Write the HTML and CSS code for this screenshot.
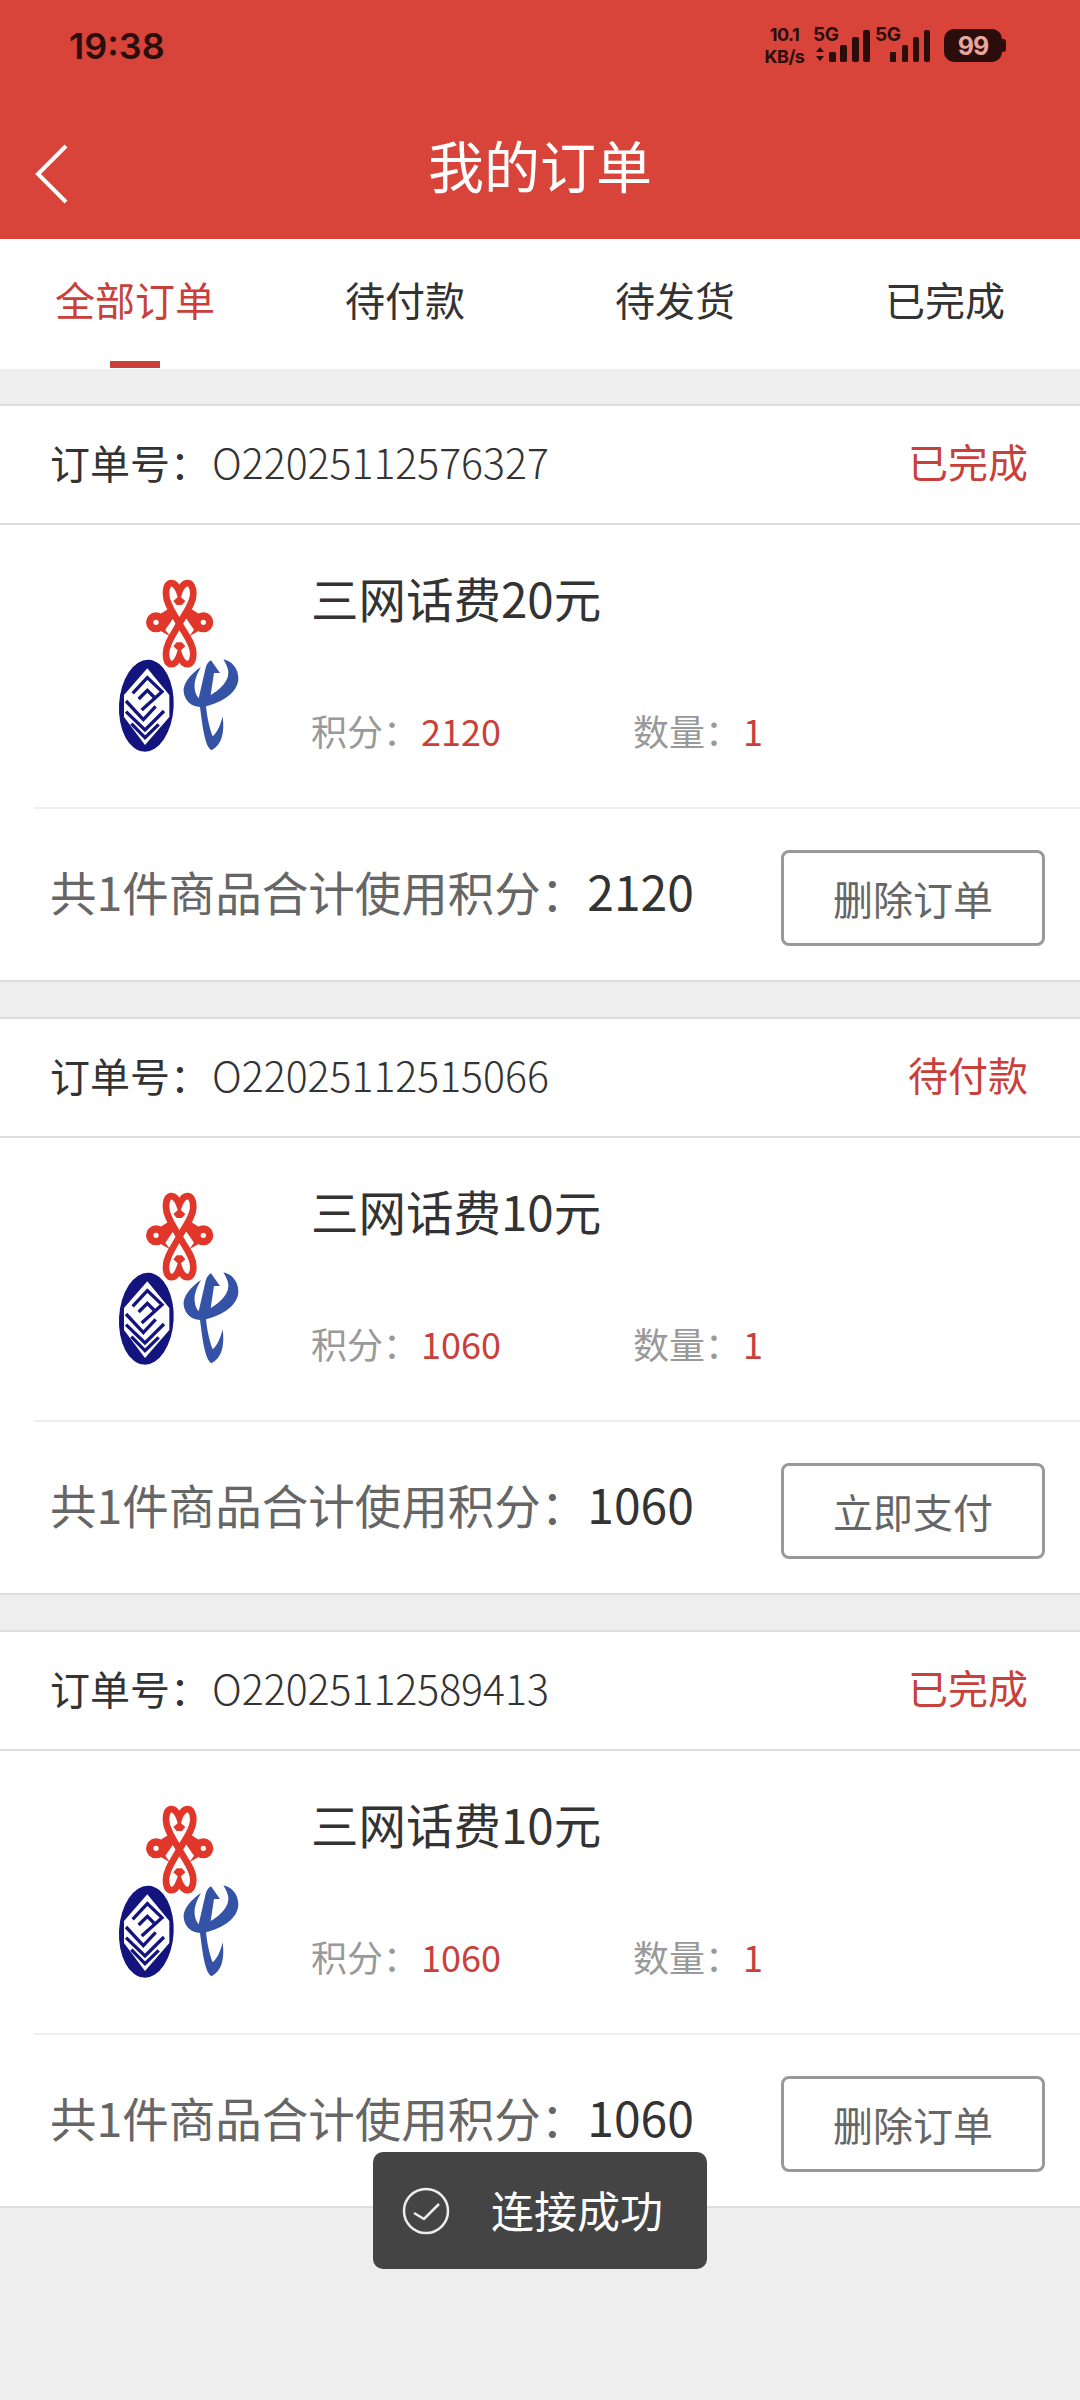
FILE: index.html
```html
<!DOCTYPE html>
<html lang="zh-CN">
<head>
  <meta charset="UTF-8">
  <title>我的订单</title>
  <link rel="stylesheet" href="styles.css">
</head>
<body>

  <!-- Logo de operadoras, se reutiliza en cada pedido -->
  <svg class="defs" width="0" height="0">
    <symbol id="logo-operadoras" viewBox="0 0 540 600">
      <g fill="none" stroke="#e1372a" stroke-width="20">
        <path d="M268 92C255 56 228 58 228 98C228 128 250 155 268 188C286 221 310 248 310 278C310 318 281 320 268 284C255 320 228 318 228 278C228 248 250 221 268 188C286 155 310 128 310 98C310 58 281 56 268 92Z"/>
        <circle cx="198" cy="184" r="19" stroke-width="22"/>
        <circle cx="340" cy="184" r="19" stroke-width="22"/>
      </g>
      <g fill="#e1372a">
        <path d="M212 158L238 142L254 166L226 206L240 226L212 210Z"/>
        <path d="M326 158L300 142L284 166L312 206L298 226L326 210Z"/>
        <path d="M250 120L268 104L286 120L276 132L260 132Z"/>
        <path d="M250 256L268 272L286 256L276 244L260 244Z"/>
      </g>
      <ellipse cx="169" cy="434" rx="82" ry="138" transform="rotate(3 169 434)" fill="#14147f"/>
      <path fill="#fff" d="M172 322L102 402V468L165 552L238 468V402Z"/>
      <g fill="none" stroke="#14147f" stroke-width="10">
        <path d="M128 397L172 350L216 392L155 447"/>
        <path d="M146 414L172 388L192 408"/>
        <path d="M108 420L160 476L197 436"/>
        <path d="M108 452L165 507L222 450"/>
        <path d="M124 488L165 530L206 490"/>
      </g>
      <path fill="#3553a6" d="M333 318C300 340 278 370 281 392C284 420 305 436 330 438C338 500 345 555 364 568C396 552 404 515 398 466C392 490 384 512 368 526C360 505 352 475 348 436C395 425 445 395 445 352C445 322 425 300 400 295C412 315 418 330 414 345C410 365 385 390 362 402L372 336L390 336L363 298C355 302 350 310 347 320L326 412C316 400 312 385 314 365C318 345 326 330 333 318Z"/>
    </symbol>
  </svg>

  <div class="app">

    <div class="top-red">
      <div class="statusbar">
        <span class="hora">19:38</span>
        <div class="status-icons">
          <div class="velocidad"><span>10.1</span><span>KB/s</span></div>
          <div class="red-movil red-uno">
            <span class="cincog">5G</span>
            <svg class="flechas" width="8" height="14" viewBox="0 0 8 14"><path d="M4 0L8 5H0ZM4 14L0 9H8Z" fill="#2b0e0c"/></svg>
            <svg width="41" height="32" viewBox="0 0 41 32" fill="#2b0e0c">
              <rect x="0" y="22" width="7" height="10" rx="1.5"/>
              <rect x="11" y="15" width="7" height="17" rx="1.5"/>
              <rect x="23" y="7" width="7" height="25" rx="2"/>
              <rect x="34" y="0" width="7" height="32" rx="2"/>
            </svg>
          </div>
          <div class="red-movil red-dos">
            <span class="cincog">5G</span>
            <svg width="40" height="32" viewBox="0 0 40 32" fill="#2b0e0c">
              <rect x="0" y="22" width="6" height="10" rx="1"/>
              <rect x="12" y="15" width="6" height="17" rx="1.5"/>
              <rect x="23" y="7" width="6" height="25" rx="2"/>
              <rect x="34" y="0" width="6" height="32" rx="2"/>
            </svg>
          </div>
          <div class="bateria"><span>99</span></div>
        </div>
      </div>
      <header class="navbar">
        <svg class="back" width="34" height="60" viewBox="0 0 34 60"><path d="M32 2L4 30L32 58" fill="none" stroke="#fff" stroke-width="4"/></svg>
        <h1>我的订单</h1>
      </header>
    </div>

    <nav class="tabs">
      <a class="tab activo">全部订单</a>
      <a class="tab">待付款</a>
      <a class="tab">待发货</a>
      <a class="tab">已完成</a>
    </nav>

    <section class="pedido">
      <div class="pedido-head">
        <span>订单号：<span class="num">O22025112576327</span></span>
        <span class="estado">已完成</span>
      </div>
      <div class="pedido-body">
        <svg class="logo"><use href="#logo-operadoras"/></svg>
        <div class="info">
          <div class="nombre">三网话费20元</div>
          <div class="meta">
            <span class="meta-col">积分：<em>2120</em></span>
            <span class="meta-col">数量：<em>1</em></span>
          </div>
        </div>
      </div>
      <div class="pedido-foot">
        <span class="total">共1件商品合计使用积分：<b>2120</b></span>
        <button class="accion-btn">删除订单</button>
      </div>
    </section>

    <section class="pedido">
      <div class="pedido-head">
        <span>订单号：<span class="num">O22025112515066</span></span>
        <span class="estado">待付款</span>
      </div>
      <div class="pedido-body">
        <svg class="logo"><use href="#logo-operadoras"/></svg>
        <div class="info">
          <div class="nombre">三网话费10元</div>
          <div class="meta">
            <span class="meta-col">积分：<em>1060</em></span>
            <span class="meta-col">数量：<em>1</em></span>
          </div>
        </div>
      </div>
      <div class="pedido-foot">
        <span class="total">共1件商品合计使用积分：<b>1060</b></span>
        <button class="accion-btn">立即支付</button>
      </div>
    </section>

    <section class="pedido">
      <div class="pedido-head">
        <span>订单号：<span class="num">O22025112589413</span></span>
        <span class="estado">已完成</span>
      </div>
      <div class="pedido-body">
        <svg class="logo"><use href="#logo-operadoras"/></svg>
        <div class="info">
          <div class="nombre">三网话费10元</div>
          <div class="meta">
            <span class="meta-col">积分：<em>1060</em></span>
            <span class="meta-col">数量：<em>1</em></span>
          </div>
        </div>
      </div>
      <div class="pedido-foot">
        <span class="total">共1件商品合计使用积分：<b>1060</b></span>
        <button class="accion-btn">删除订单</button>
      </div>
    </section>

    <div class="toast">
      <svg width="48" height="48" viewBox="0 0 48 48" fill="none" stroke="#eee" stroke-width="2.5"><circle cx="24" cy="24" r="22"/><path d="M12 26L22 32L37 17"/></svg>
      <span class="toast-txt">连接成功</span>
    </div>

  </div>

</body>
</html>
```

FILE: styles.css
```css
:root {
  --rojo: #d8433a;
  --rojo-texto: #c9403a;
  --fondo: #eeeeee;
  --linea: #dddddd;
  --oscuro: #333333;
  --status: #2b0e0c;
}

* {
  box-sizing: border-box;
}

body {
  margin: 0;
  background-color: var(--fondo);
  font-family: "Noto Sans CJK SC", "Noto Sans", sans-serif;
  color: var(--oscuro);
}

.defs {
  position: absolute;
}

.app {
  position: relative;
  width: 1080px;
  height: 2400px;
  overflow: hidden;
}

.top-red {
  height: 239px;
  background-color: var(--rojo);
}

.statusbar {
  display: flex;
  justify-content: space-between;
  height: 90px;
  padding: 29px 78px 0 69px;
  color: var(--status);
}

.hora {
  font-family: Inter, sans-serif;
  font-size: 36px;
  font-weight: 600;
  line-height: 34px;
}

.status-icons {
  display: flex;
  align-items: flex-start;
}

.velocidad {
  display: flex;
  flex-direction: column;
  align-items: center;
  width: 43px;
  margin-top: -5px;
  font-family: Inter, sans-serif;
  font-size: 18px;
  font-weight: 700;
  line-height: 22px;
  letter-spacing: -0.5px;
}

.red-movil {
  position: relative;
  display: flex;
  align-items: flex-end;
  height: 33px;
}

.red-uno {
  width: 57px;
  margin-left: 7px;
  padding-left: 3px;
  gap: 5px;
}

.red-dos {
  width: 55px;
  margin-left: 5px;
  padding-left: 15px;
}

.flechas {
  margin-bottom: 1px;
}

.cincog {
  position: absolute;
  top: -5px;
  left: 0;
  font-family: Inter, sans-serif;
  font-size: 19px;
  font-weight: 700;
  line-height: 22px;
  letter-spacing: -0.5px;
}

.bateria {
  position: relative;
  display: flex;
  align-items: center;
  justify-content: center;
  width: 58px;
  height: 33px;
  margin-left: 14px;
  background-color: var(--status);
  border-radius: 10px;
  color: #e8a79e;
  font-family: Inter, sans-serif;
  font-size: 25px;
  font-weight: 700;
  letter-spacing: -1px;
}

.bateria::after {
  content: "";
  position: absolute;
  top: 10px;
  right: -4px;
  width: 4px;
  height: 13px;
  background-color: var(--status);
  border-radius: 0 3px 3px 0;
}

.navbar {
  position: relative;
  display: flex;
  align-items: center;
  justify-content: center;
  height: 149px;
  padding-bottom: 2px;
}

.navbar h1 {
  margin: 0;
  color: #fff;
  font-size: 56px;
  font-weight: 400;
  line-height: 70px;
}

.back {
  position: absolute;
  top: 54px;
  left: 34px;
}

.tabs {
  display: grid;
  grid-template-columns: repeat(4, 1fr);
  height: 130px;
  background-color: #fff;
}

.tab {
  position: relative;
  padding-top: 31px;
  text-align: center;
  font-size: 40px;
  line-height: 58px;
}

.tab.activo {
  color: var(--rojo-texto);
}

.tab.activo::after {
  content: "";
  position: absolute;
  bottom: 1px;
  left: 110px;
  width: 50px;
  height: 7px;
  background-color: var(--rojo-texto);
}

.pedido {
  margin-top: 35px;
  background-color: #fff;
  border-top: 2px solid var(--linea);
  border-bottom: 2px solid var(--linea);
}

.pedido-head {
  display: flex;
  align-items: center;
  justify-content: space-between;
  height: 119px;
  padding: 0 52px 8px 50px;
  border-bottom: 2px solid var(--linea);
  font-size: 40px;
}

.num {
  margin-left: 2px;
  font-size: 41px;
  font-weight: 300;
}

.estado {
  color: var(--rojo-texto);
}

.pedido-body {
  display: flex;
  height: 284px;
  margin-left: 34px;
  padding: 36px 0 0 56px;
  border-bottom: 2px solid #eeeeee;
}

.logo {
  width: 180px;
  height: 200px;
}

.info {
  margin-left: 41px;
}

.nombre {
  margin-top: 2px;
  font-size: 47.5px;
  line-height: 70px;
}

.meta {
  display: flex;
  margin-top: 71px;
  color: #999;
  font-size: 36px;
  line-height: 52px;
}

.meta-col {
  width: 322px;
}

.meta em {
  margin-left: 2px;
  color: var(--rojo-texto);
  font-style: normal;
}

.pedido-foot {
  display: flex;
  align-items: center;
  justify-content: space-between;
  height: 171px;
  padding: 7px 35px 0 50px;
}

.total {
  margin-bottom: 16px;
  color: #666;
  font-size: 46.5px;
}

.total b {
  color: var(--oscuro);
  font-size: 48px;
  font-weight: 400;
}

.accion-btn {
  width: 264px;
  height: 96px;
  background: #fff;
  border: 3px solid #999;
  border-radius: 8px;
  color: #666;
  font-family: inherit;
  font-size: 40px;
}

.toast {
  position: absolute;
  top: 2152px;
  left: 373px;
  display: flex;
  align-items: center;
  gap: 41px;
  width: 334px;
  height: 117px;
  padding-left: 29px;
  background-color: #444;
  border-radius: 10px;
  color: #fff;
  font-size: 43px;
}

.toast-txt {
  margin-bottom: 3px;
}
```
